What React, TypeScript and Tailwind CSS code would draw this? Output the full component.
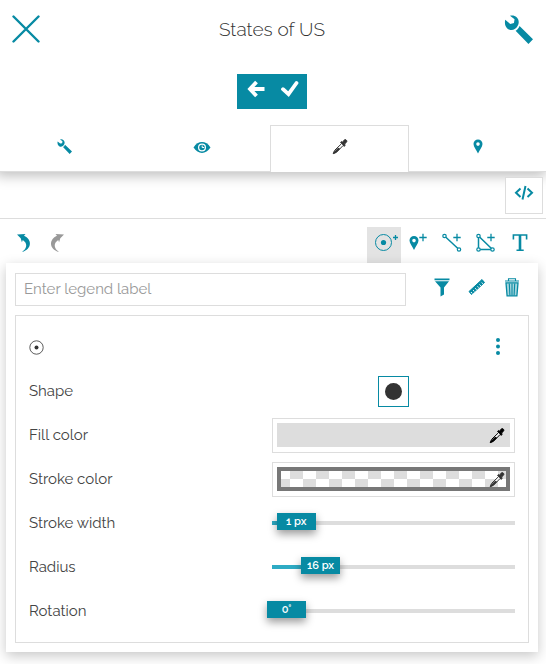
import { useState, type ReactNode } from 'react';

const TEAL = '#078aa3';

function Icon({ size = 20, box = 20, children }: { size?: number; box?: number; children: ReactNode }) {
  return (
    <svg width={size} height={size} viewBox={`0 0 ${box} ${box}`} fill="none" className="shrink-0" aria-hidden="true">
      {children}
    </svg>
  );
}

function Wrench({ size }: { size: number }) {
  return (
    <Icon size={size} box={28}>
      <path
        d="M1.2 4.6 6 8.600 9.600 7.800 10.200 4.200 5.800.7C9.600-.6 14.400 2 14.200 7c-.1 1-.2 1.800-.5 2.400C12 13.600 8.500 15 6 14.400 2.400 13.600 0 9.600 1.200 4.600Z"
        fill="currentColor"
      />
      <path d="m15 10.500 13 12.900-4.400 4.600L11.200 15.100c1.800-1 3-2.500 3.800-4.600Z" fill="currentColor" />
    </Icon>
  );
}

function Dropper({ size = 16 }: { size?: number }) {
  return (
    <Icon size={size} box={16}>
      <path d="M8.600 3.300 9.800 2.600l.8.6L12.300 1c1.300-1.300 3.300.8 2.200 2.200l-2 1.900.7 1-1 1.300Z" fill="currentColor" stroke="currentColor" strokeWidth="1" />
      <path d="M9.400 4.800 2.600 11.400 1.200 14.600l3.300-1.300 6.600-6.800" fill="#fff" fillOpacity=".8" stroke="currentColor" strokeWidth="1" />
      <path d="m6.200 8.800-4 3.600-1.200 2.800 3-1.400 4.200-4Z" fill="currentColor" />
    </Icon>
  );
}

function Plus({ x, y, r = 3 }: { x: number; y: number; r?: number }) {
  return <path d={`M${x - r} ${y}h${2 * r}M${x} ${y - r}v${2 * r}`} stroke="currentColor" strokeWidth="1.300" />;
}

const pinPath = 'M5 1.500a4.500 4.500 0 0 1 4.500 4.500C9.500 9 6.500 12 5 15.500 3.500 12 .5 9 .5 6A4.500 4.500 0 0 1 5 1.500Zm0 2.800a1.800 1.800 0 1 0 0 3.600 1.800 1.800 0 0 0 0-3.600Z';

const tabs = [
  { name: 'Settings', icon: <Wrench size={15} /> },
  {
    name: 'Display',
    icon: (
      <Icon size={18} box={18}>
        <path d="M.5 8.500C5 1.300 13 1.300 17.500 8.500 13 15.700 5 15.700.5 8.500Z" fill="currentColor" />
        <circle cx="9" cy="8.500" r="3.400" stroke="#fff" strokeWidth="1.200" />
        <path d="M9.200 6.500v2h2" stroke="#fff" strokeWidth="1" />
      </Icon>
    ),
  },
  { name: 'Style', icon: <Dropper size={16} /> },
  {
    name: 'Markers',
    icon: (
      <svg width="10" height="15" viewBox="0 1 10 15" fill="currentColor" fillRule="evenodd" aria-hidden="true">
        <path d={pinPath} />
      </svg>
    ),
  },
];

const tools = [
  {
    name: 'Add mark',
    icon: (
      <Icon size={30} box={30}>
        <circle cx="14.500" cy="11.500" r="8" stroke="currentColor" />
        <circle cx="14.500" cy="11.500" r="2.600" fill="currentColor" />
        <Plus x={26.500} y={6.500} r={2.500} />
      </Icon>
    ),
  },
  {
    name: 'Add icon',
    icon: (
      <Icon size={24} box={24}>
        <g transform="translate(3 3.500)">
          <path d={pinPath} fill="currentColor" fillRule="evenodd" />
        </g>
        <Plus x={17} y={6.500} r={3.700} />
      </Icon>
    ),
  },
  {
    name: 'Add line',
    icon: (
      <Icon size={24} box={24}>
        <path d="m4.500 5 14.500 13.500" stroke="currentColor" strokeWidth="1.500" />
        <circle cx="4.500" cy="5" r="1.700" fill="#fff" stroke="currentColor" strokeWidth="1.200" />
        <circle cx="19" cy="18.500" r="1.700" fill="#fff" stroke="currentColor" strokeWidth="1.200" />
        <Plus x={17} y={6.500} r={3.700} />
      </Icon>
    ),
  },
  {
    name: 'Add polygon',
    icon: (
      <Icon size={24} box={24}>
        <path d="M4.500 5v13.500H18.500Z" stroke="currentColor" strokeWidth="1.500" />
        <circle cx="4.500" cy="5" r="1.700" fill="#fff" stroke="currentColor" strokeWidth="1.200" />
        <circle cx="4.500" cy="18.500" r="1.700" fill="#fff" stroke="currentColor" strokeWidth="1.200" />
        <circle cx="18.500" cy="18.500" r="1.700" fill="#fff" stroke="currentColor" strokeWidth="1.200" />
        <Plus x={17} y={6.500} r={3.700} />
      </Icon>
    ),
  },
  {
    name: 'Add text',
    icon: (
      <Icon size={24} box={24}>
        <path d="M5.400 8.500V4h13.200v4.500M8.500 19.300h7.200" stroke="currentColor" strokeWidth="1.600" />
        <path d="M12 4v15.300" stroke="currentColor" strokeWidth="2.600" />
      </Icon>
    ),
  },
];

const ruleActions = [
  {
    name: 'Filter',
    icon: (
      <Icon>
        <path d="M2.500 1.500h15v1.800h-15ZM3 4.300h14L12 10.500V17.500l-3.500 2v-9Z" fill="currentColor" />
      </Icon>
    ),
  },
  {
    name: 'Scale',
    icon: (
      <Icon>
        <path d="M15 2.500 17.500 5.500 4.500 17.500 2 14.500Z" fill="currentColor" stroke="currentColor" />
        <path d="m4 15 1.200 1.500m1-3.400 1 1.300m1-3.200 1.300 1.500m1-3.400 1 1.300m1-3.200 1.300 1.500m1-3.400 1 1.300" stroke="#fff" strokeWidth="1" />
      </Icon>
    ),
  },
  {
    name: 'Delete',
    icon: (
      <Icon>
        <path d="M3 4h14M6.500 3.500V1.700h7v1.800" stroke="currentColor" strokeWidth="1.100" />
        <path d="M4 5.800h12L14.900 18.800H5.100Z" fill="#a5d5dd" stroke="currentColor" strokeWidth="1.300" />
        <path d="m7.300 6.500.6 12M12.700 6.500l-.6 12M10 6.500v12" stroke="currentColor" strokeWidth="1.100" />
      </Icon>
    ),
  },
];

function Row({ id, label, children }: { id: string; label: string; children: ReactNode }) {
  return (
    <div className="flex h-11 items-center">
      <label htmlFor={id} className="w-1/2 text-[15px] leading-5 text-[#444]">
        {label}
      </label>
      <div className="flex w-1/2 justify-center">{children}</div>
    </div>
  );
}

function Slider({ id, unit, start, min, max }: { id: string; unit: string; start: number; min: number; max: number }) {
  const [value, setValue] = useState(start);
  const share = ((value - min) / (max - min)) * 100;
  return (
    <div className="relative flex h-5 w-full items-center">
      <div className="h-1 w-full bg-[#ddd]">
        <div className="h-1 bg-[#2eabc4]" style={{ width: `${share}%` }} />
      </div>
      <span
        className="absolute top-0 -ml-[5px] flex h-[17px] w-[39px] items-center justify-center bg-[#078aa3] text-[11px] leading-none font-semibold text-white shadow-[0_4px_8px_rgba(0,0,0,0.4)]"
        style={{ left: `${share}%` }}
      >
        {value}
        {unit}
      </span>
      <input
        id={id}
        type="range"
        min={min}
        max={max}
        value={value}
        onChange={(e) => setValue(Number(e.target.value))}
        className="absolute inset-0 w-full cursor-pointer opacity-0"
      />
    </div>
  );
}

export default function App() {
  const [label, setLabel] = useState('');
  return (
    <div className="min-h-screen overflow-hidden bg-white font-['Raleway','Lato',sans-serif] text-[#333]">
      <header className="flex h-[58px] items-center justify-between pr-[13px] pl-3">
        <button aria-label="Close" className="text-[#078aa3]">
          <Icon size={28} box={28}>
            <path d="m1.500 1.500 25 25m0-25-25 25" stroke={TEAL} strokeWidth="2.400" strokeLinecap="round" />
          </Icon>
        </button>
        <h1 className="text-[19px] leading-6 font-light">States of US</h1>
        <button aria-label="Settings" className="text-[#078aa3]">
          <Wrench size={29} />
        </button>
      </header>

      <div className="relative z-10 flex justify-center bg-white pt-4 pr-[2px] pb-4">
        <button aria-label="Back" className="flex h-[35px] w-[35px] justify-center bg-[#078aa3] pt-[6px] pl-[2px]">
          <Icon size={18} box={18}>
            <path d="M9.500 2 3 9l6.500 7M3.500 9H17.500" stroke="#fff" strokeWidth="3.800" />
          </Icon>
        </button>
        <button aria-label="Save" className="flex h-[35px] w-[35px] justify-center bg-[#078aa3] pt-[6px]">
          <Icon size={18} box={18}>
            <path d="m2 9.200 5.500 5L15.500 3" stroke="#fff" strokeWidth="3.800" strokeLinecap="round" />
          </Icon>
        </button>
      </div>

      <nav role="tablist" className="-ml-1 flex h-[47px] border-b border-[#ddd] bg-white shadow-[0_4px_12px_rgba(0,0,0,0.25)]">
        {tabs.map((tab) => (
          <button
            key={tab.name}
            role="tab"
            aria-label={tab.name}
            aria-selected={tab.name === 'Style'}
            className={
              tab.name === 'Style'
                ? '-mb-px flex flex-1 justify-center border border-b-0 border-[#ddd] bg-white pt-[13px] text-[#333]'
                : 'flex flex-1 justify-center pt-[14px] text-[#078aa3]'
            }
          >
            {tab.icon}
          </button>
        ))}
      </nav>

      <div className="flex h-[47px] items-center justify-end border-b border-[#ddd] pr-[3px]">
        <button aria-label="Code editor" className="flex h-[37px] w-[38px] justify-center border border-[#ddd] bg-white pt-[5px] text-[#078aa3]">
          <Icon size={20} box={20}>
            <path d="M6.500 5.500 2 9.700l4.500 4.200M13.500 5.500 18 9.700l-4.500 4.200M11.500 3 8.500 16.500" stroke="currentColor" strokeWidth="2" />
          </Icon>
        </button>
      </div>

      <div className="flex items-start justify-between pt-2 pr-[9px] pl-[14px]">
        <div className="flex">
          <button aria-label="Undo" className="flex h-8 w-[34px] items-center text-[#078aa3]">
            <Icon size={20} box={20}>
              <path d="M3 1.500 11.500 1 10 2.700C18 6 18.500 16 8 19 13 15.500 14 10.500 8.800 7l-.9 2.200L6.700 5.300Z" fill="currentColor" />
            </Icon>
          </button>
          <button aria-label="Redo" disabled className="flex h-8 w-[34px] items-center text-[#999]">
            <Icon size={20} box={20}>
              <path d="M16 1.500 7.500 1 9 2.700C1 6 .5 16 11 19 6 15.500 5 10.500 10.200 7l.9 2.200 1.200-3.900Z" fill="currentColor" />
            </Icon>
          </button>
        </div>
        <div className="flex">
          {tools.map((tool, i) => (
            <button
              key={tool.name}
              aria-label={tool.name}
              className={
                i === 0
                  ? 'flex h-9 w-[34px] justify-center bg-[#e3e3e3] pt-1 text-[#078aa3]'
                  : 'flex h-9 w-[34px] justify-center pt-1 text-[#078aa3]'
              }
            >
              {tool.icon}
            </button>
          ))}
        </div>
      </div>

      <main className="relative mr-2 mb-3 ml-[6px] bg-white px-[9px] pt-[10px] pb-[9px] shadow-[0_4px_12px_rgba(0,0,0,0.22)]">
        <div className="flex items-start">
          <input
            aria-label="Legend label"
            placeholder="Enter legend label"
            value={label}
            onChange={(e) => setLabel(e.target.value)}
            className="h-[33px] min-w-0 flex-1 border border-[#ddd] bg-white px-2 pb-[2px] text-[15px] outline-none placeholder:text-[#999]"
          />
          <div className="ml-[18px] flex">
            {ruleActions.map((action) => (
              <button key={action.name} aria-label={action.name} className="flex h-7 w-[35px] items-center justify-center text-[#078aa3]">
                {action.icon}
              </button>
            ))}
          </div>
        </div>

        <section className="mt-[9px] border border-[#ddd] px-[13px] pt-[9px] pb-[9px]">
          <div className="flex h-11 items-center justify-between">
            <Icon size={15} box={15}>
              <circle cx="7.500" cy="7.500" r="6.700" stroke="#333" strokeWidth=".8" />
              <circle cx="7.500" cy="7.500" r="2" fill="#333" />
            </Icon>
            <button aria-label="More options" className="mr-2 text-[#078aa3]">
              <Icon size={18} box={18}>
                <circle cx="9" cy="2" r="2" fill="currentColor" />
                <circle cx="9" cy="8.500" r="2" fill="currentColor" />
                <circle cx="9" cy="15" r="2" fill="currentColor" />
              </Icon>
            </button>
          </div>
          <Row id="shape" label="Shape">
            <button id="shape" className="flex h-[31px] w-[31px] items-center justify-center border border-[#078aa3]">
              <span className="h-[17px] w-[17px] rounded-full bg-[#333]" />
            </button>
          </Row>
          <Row id="fill" label="Fill color">
            <button id="fill" className="h-[35px] w-full border border-[#ddd] px-1 pb-px">
              <span className="flex h-6 items-center justify-end bg-[#ddd] pt-[2px] pr-[5px] text-black">
                <Dropper />
              </span>
            </button>
          </Row>
          <Row id="stroke" label="Stroke color">
            <button id="stroke" className="h-[35px] w-full border border-[#ddd] px-1 pb-px">
              <span className="flex h-6 items-center justify-end border-4 border-[#777] bg-[conic-gradient(#fff_25%,#ddd_0_50%,#fff_0_75%,#ddd_0)] bg-[length:26px_16px] bg-[position:9px_0px] pt-[2px] pr-px text-[#333]">
                <Dropper />
              </span>
            </button>
          </Row>
          <Row id="width" label="Stroke width">
            <Slider id="width" unit=" px" start={1} min={0} max={25} />
          </Row>
          <Row id="radius" label="Radius">
            <Slider id="radius" unit=" px" start={16} min={1} max={108} />
          </Row>
          <Row id="rotation" label="Rotation">
            <Slider id="rotation" unit="°" start={0} min={0} max={360} />
          </Row>
        </section>
      </main>
    </div>
  );
}
